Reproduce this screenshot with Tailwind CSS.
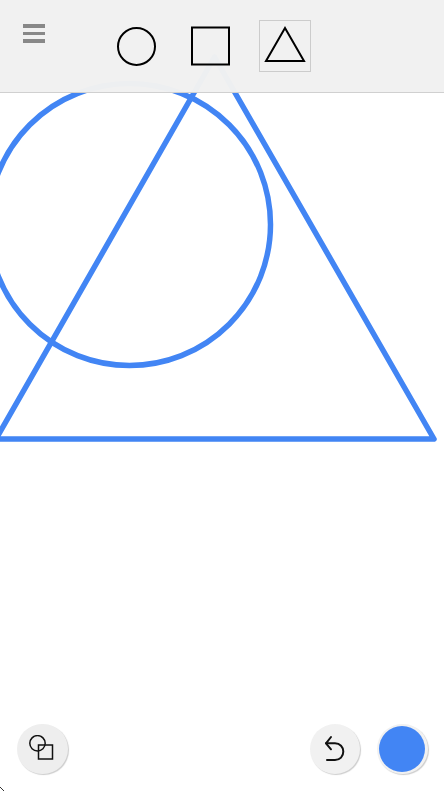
<!DOCTYPE html>
<html>
<head>
<meta charset="utf-8">
<script src="https://cdn.jsdelivr.net/npm/@tailwindcss/browser@4"></script>
</head>
<body class="bg-white">
<div class="relative w-[444px] h-[791px] overflow-hidden bg-white">
  <svg class="absolute inset-0" width="444" height="791" fill="none" stroke="#4285f4" stroke-width="5.5">
    <circle cx="129.5" cy="224.5" r="141"/>
    <path d="M214.5 57 L434 439 L-4 439 Z" stroke-linejoin="round"/>
  </svg>

  <header class="relative flex h-[93px] bg-[#f1f1f1]/98 border-b border-[#d0d0d0]">
    <button class="flex flex-col gap-[4px] w-[22px] ml-[23px] mt-[24px] self-start">
      <span class="block h-[3.5px] bg-[#888888]"></span>
      <span class="block h-[3.5px] bg-[#888888]"></span>
      <span class="block h-[3.5px] bg-[#888888]"></span>
    </button>
    <div class="flex items-center ml-[65px] mt-[-1px] h-[93px]">
      <svg width="52" height="52" viewBox="0 0 52 52" fill="none" stroke="#000" stroke-width="2"><circle cx="26.5" cy="26.5" r="18.5"/></svg>
      <svg class="ml-[23px]" width="52" height="52" viewBox="0 0 52 52" fill="none" stroke="#000" stroke-width="2"><rect x="7" y="7.5" width="37" height="37"/></svg>
      <div class="ml-[22px] w-[52px] h-[52px] border border-[#cccccc] flex items-center justify-center">
        <svg width="50" height="50" viewBox="0 0 50 50" fill="none" stroke="#000" stroke-width="2"><path d="M25 7 L44 40 L6 40 Z"/></svg>
      </div>
    </div>
  </header>

  <button class="absolute left-[17px] top-[723.5px] w-[50.5px] h-[50.5px] rounded-full bg-[#eeeeee] shadow-[1px_1px_1px_rgba(0,0,0,0.2)] flex items-center justify-center">
    <svg width="28" height="28" viewBox="0 0 28 28" fill="none" stroke="#111" stroke-width="1.5"><circle cx="9.5" cy="8.3" r="7.7"/><rect x="10.5" y="10" width="14" height="14"/></svg>
  </button>
  <button class="absolute left-[309.5px] top-[723.5px] w-[50.5px] h-[50.5px] rounded-full bg-[#f1f1f1] shadow-[1px_1px_1px_rgba(0,0,0,0.2)] flex items-center justify-center">
    <svg width="24" height="28" viewBox="0 0 24 28" fill="none" stroke="#111" stroke-width="2" stroke-linecap="round" stroke-linejoin="round"><path d="M8 2 L3 8.3 L8 14.3"/><path d="M3 8.3 H12 C17 8.3 20.3 12 20.3 16.6 C20.3 21.5 17 25 12 25 H4"/></svg>
  </button>
  <button class="absolute left-[377px] top-[723.5px] w-[50.5px] h-[50.5px] rounded-full bg-[#f1f1f1] shadow-[1px_1px_1px_rgba(0,0,0,0.2)] flex items-center justify-center">
    <span class="block w-[46px] h-[46px] rounded-full bg-[#4285f4]"></span>
  </button>

  <svg class="absolute left-0 top-[786px]" width="6" height="5" fill="none" stroke="#333" stroke-width="1"><path d="M0 1 L4 5"/></svg>
</div>
</body>
</html>
